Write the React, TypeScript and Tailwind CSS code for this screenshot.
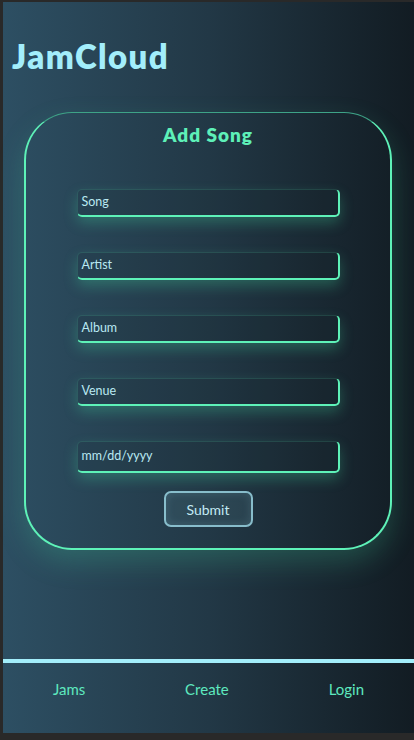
import React from "react";

const fields = ["Song", "Artist", "Album", "Venue"];

function Field({ placeholder, tall }: { placeholder: string; tall?: boolean }) {
  return (
    <div
      className={`
        w-[263px] ${tall ? "h-[32px]" : "h-[28px]"}
        flex items-center px-[4px]
        rounded-[5px]
        border-t border-l border-[#5ef2b8]/15
        border-r-2 border-b-2 border-r-[#5ef2b8] border-b-[#5ef2b8]
        bg-[#0f1a20]/10
        shadow-[0_6px_14px_rgba(70,225,165,0.28)]
        text-[12.5px] text-[#b9e9f2]
      `}
    >
      {placeholder}
    </div>
  );
}

export default function App() {
  return (
    <div
      className="min-h-screen bg-[#292929] pl-[3px] pt-[2px] pb-[7px]"
      style={{ fontFamily: "Lato, 'Noto Sans', sans-serif" }}
    >
      <div className="h-[731px] flex flex-col bg-gradient-to-r from-[#2d4f63] via-[#223846] to-[#121c23]">
        {/* Header */}
        <header className="pl-[9px] pt-[35px] h-[110px]">
          <h1 className="text-[33px] leading-[38px] font-extrabold tracking-[1.4px] text-[#a3eefb]">
            JamCloud
          </h1>
        </header>

        {/* Card */}
        <main className="flex-1">
          <div
            className="
              ml-[21px] w-[368px] h-[438px]
              rounded-[48px]
              border-2 border-t border-[#5ef2b8] border-t-[#3ea387]
              shadow-[0_12px_28px_rgba(70,225,165,0.22)]
              flex flex-col items-center
              pt-[10px]
            "
          >
            <h2 className="text-[19px] leading-[24px] font-extrabold text-[#5ef0b8] tracking-[1px]">
              Add Song
            </h2>

            <div className="mt-[42px] flex flex-col gap-[35px]">
              {fields.map((f) => (
                <Field key={f} placeholder={f} />
              ))}
              <Field placeholder="mm/dd/yyyy" tall />
            </div>

            <button
              className="
                mt-[18px] w-[89px] h-[36px]
                rounded-[7px]
                border-2 border-[#9fdbea]/80
                bg-[#8fd6e6]/10
                shadow-[inset_0_0_10px_rgba(160,230,245,0.15)]
                text-[14px] text-[#c3ebf4]
              "
            >
              Submit
            </button>
          </div>
        </main>

        {/* Bottom nav */}
        <nav className="h-[74px] border-t-4 border-[#a3eefb] flex justify-around pt-[15px]">
          <a className="text-[15px] text-[#5ee8bf]">Jams</a>
          <a className="text-[15px] text-[#5ee8bf]">Create</a>
          <a className="text-[15px] text-[#5ee8bf]">Login</a>
        </nav>
      </div>
    </div>
  );
}
